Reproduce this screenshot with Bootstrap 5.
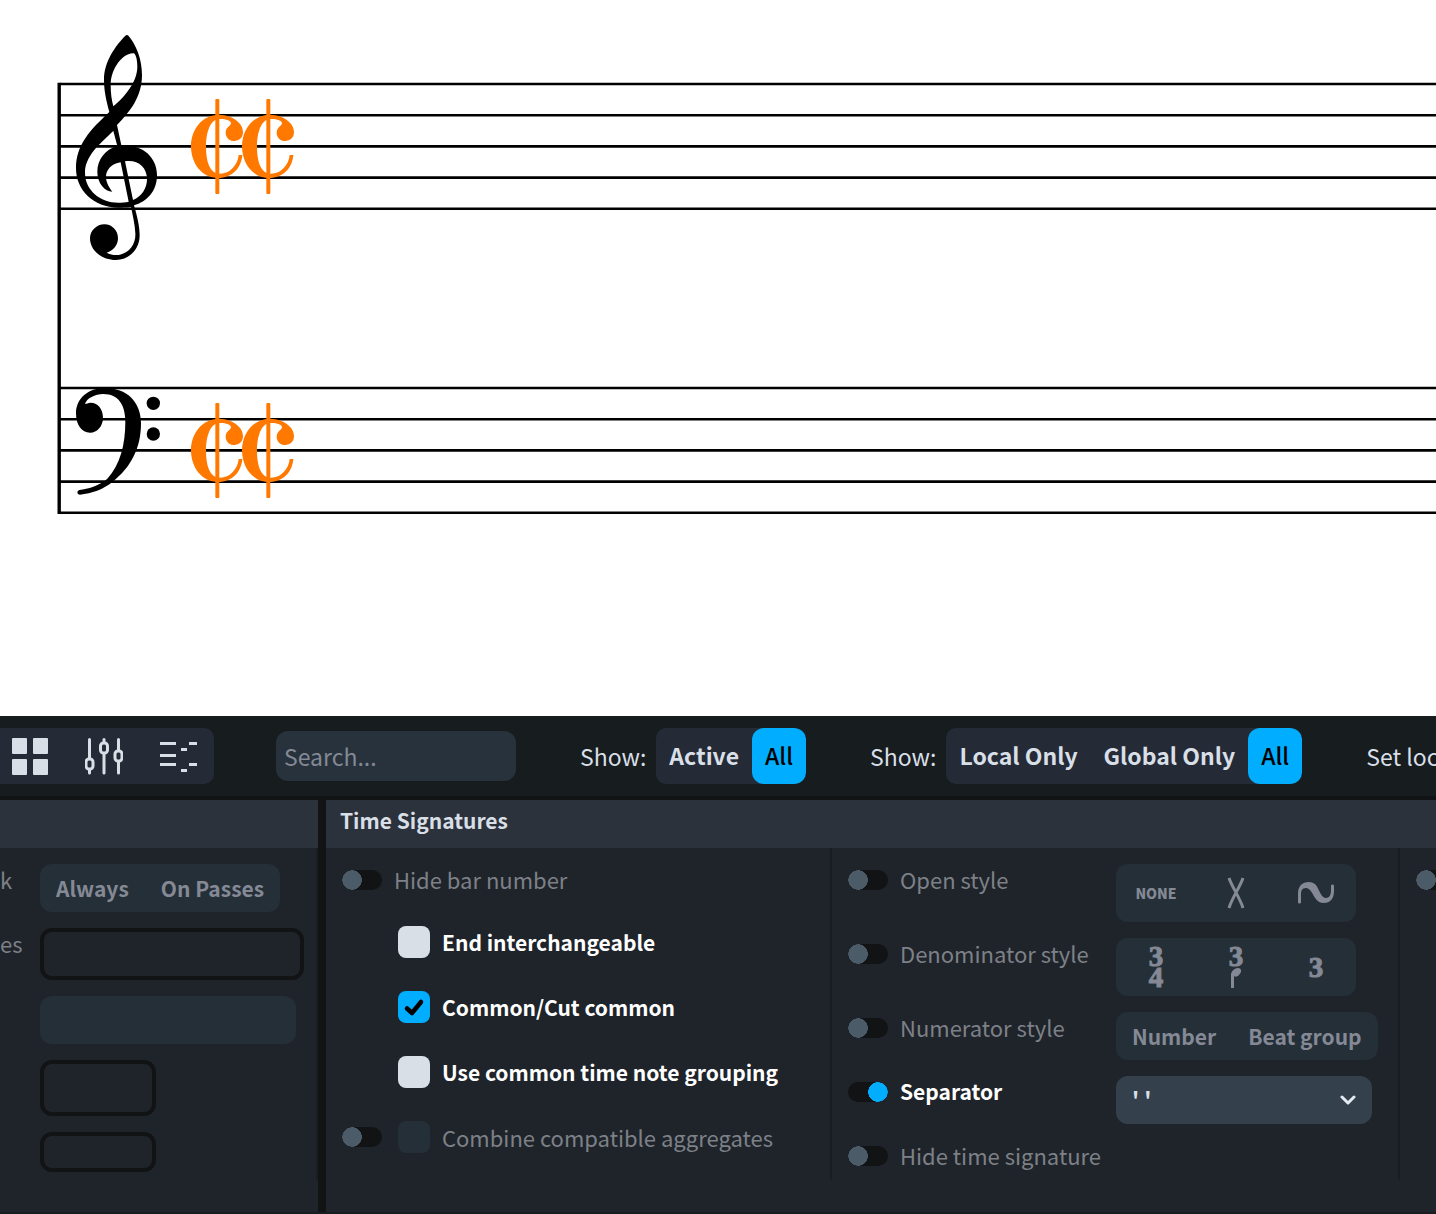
<!DOCTYPE html>
<html lang="en">
<head>
<meta charset="utf-8">
<meta name="viewport" content="width=device-width, initial-scale=1">
<title>Time Signatures – Properties</title>
<link href="https://cdn.jsdelivr.net/npm/bootstrap@5.3.0/dist/css/bootstrap.min.css" rel="stylesheet">
<style>
  body { font-family: "Noto Sans CJK SC", "Noto Sans", sans-serif; font-size: 22px; line-height: 32px; background: #fff; color: #7d8187; overflow-x: hidden; }
  .score-area { height: 716px; overflow: hidden; }
  .score-area svg { display: block; width: 100%; height: 100%; }
  .tool-strip { background: #171c1f; border-bottom: 4px solid #111315; height: 84px; padding: 12px 0; color: #d9dfe7; font-size: 23px; white-space: nowrap; overflow: hidden; }
  .tool-strip > * { flex: none; }
  .filter-set { display: flex; align-items: center; gap: 10px; margin-left: 64px; }
  .pill-set { background: #252f38; border-radius: 12px; overflow: hidden; display: inline-flex; flex: none; }
  .pill-set .btn { --bs-btn-color: #848995; --bs-btn-border-width: 0; --bs-btn-padding-x: 16px; --bs-btn-padding-y: 0; --bs-btn-border-radius: 0; --bs-btn-font-size: 21px; --bs-btn-line-height: 48px; --bs-btn-font-weight: 700; --bs-btn-hover-color: #d9dfe7; white-space: nowrap; }
  .tool-strip .pill-set { background: #252b36; border-radius: 10px; height: 56px; }
  .tool-strip .pill-set .btn { --bs-btn-color: #d9dfe7; --bs-btn-padding-x: 13px; --bs-btn-font-size: 23px; --bs-btn-line-height: 54px; --bs-btn-border-radius: 12px; --bs-btn-active-bg: #00adff; --bs-btn-active-color: #000; padding-bottom: 2px; }
  .tool-strip .pill-set .btn.active { font-weight: 500; }
  .tool-strip .view-set .btn { padding: 0 18px; line-height: 1; }
  .tool-strip .view-set .btn:first-child { padding-left: 11px; }
  .tool-strip .view-set .btn:last-child { padding-right: 17px; }
  .tool-strip .view-set { border-radius: 0 10px 10px 0; margin-right: 62px; }
  .find-box.form-control { width: 240px; height: 50px; background: #27323c; border: 0; border-radius: 12px; color: #d9dfe7; font-size: 23px; padding: 0 8px; }
  .find-box::placeholder { color: #848995; }
  .props { background: #1f242b; min-height: 414px; border-bottom: 2px solid #181c20; }
  .props-head { background: #2b323c; height: 48px; padding: 5px 14px; font-size: 21px; font-weight: 700; color: #d9dfe7; margin: 0; line-height: 30px; }
  .panel-left { flex: 0 0 326px; border-right: 8px solid #111315; }
  .panel-main { flex: 1 1 0; min-width: 0; overflow: hidden; }
  .prop-col { min-height: 332px; padding: 16px 16px 8px; border-right: 2px solid #191d21; flex: none; }
  .left-col { padding: 16px 12px 8px 0; }
  .left-col .lbl { width: 40px; line-height: 30px; }
  .mid-col { width: 506px; }
  .right-col { width: 568px; }
  .side-col { width: 300px; }
  .toggle-line { display: flex; align-items: center; height: 32px; gap: 12px; }
  .toggle-line label { padding-bottom: 2px; }
  .toggle-line .form-check-input { margin: 0; float: none; flex: none; width: 40px; height: 20px; border: 0; border-radius: 10px; background: radial-gradient(circle at 10px 10px, #4b5b68 9px, transparent 10px) #111315; }
  .toggle-line .form-check-input { background: radial-gradient(circle at 10px 10px, #4b5b68 95%, transparent) left / 20px 20px no-repeat, #111315; background: radial-gradient(circle closest-side, #4b5b68 96%, transparent) left / 20px 20px no-repeat #111315; }
  .toggle-line .form-check-input:checked { background: radial-gradient(circle closest-side, #00adff 96%, transparent) right / 20px 20px no-repeat #111315; }
  .lbl-on { color: #fff; font-size: 21px; font-weight: 700; }
  .right-col .toggle-line { width: 268px; }
  .tick-list { display: flex; flex-direction: column; gap: 33px; margin-top: 30px; }
  .tick-line { display: flex; align-items: center; height: 32px; gap: 12px; padding-left: 56px; }
  .tick-line .tick { margin: 0; flex: none; width: 32px; height: 32px; border: 0; border-radius: 8px; background-color: #d9dfe7; }
  .tick-line .tick:checked { background-color: #00adff; background-image: url("data:image/svg+xml,%3Csvg xmlns='http://www.w3.org/2000/svg' viewBox='0 0 32 32'%3E%3Cpath d='M9 17.500l5 4.500 9-11' fill='none' stroke='%23000' stroke-width='4.500' stroke-linecap='round' stroke-linejoin='round'/%3E%3C/svg%3E"); }
  .tick-line .tick:disabled { background-color: #252f38; opacity: 1; }
  .tick-line .tick:disabled ~ label { opacity: 1; }
  .tick-line.with-switch { padding-left: 0; }
  .tick-line.with-switch .toggle-line { width: 44px; }
  .text-slot.form-control { background: transparent; border: 4px solid #111315; border-radius: 12px; padding: 0 12px; }
  .slot-wide { width: 264px; height: 52px; }
  .slot-tall { width: 116px; height: 56px; }
  .slot-low { width: 116px; height: 40px; }
  .drop.form-select { width: 256px; height: 48px; border: 0; border-radius: 12px; font-size: 22px; font-weight: 700; line-height: 32px; padding: 0 48px 4px 16px; color: #d9dfe7; background: #34414d url("data:image/svg+xml,%3Csvg xmlns='http://www.w3.org/2000/svg' viewBox='0 0 16 10'%3E%3Cpath d='M2 2l6 6 6-6' fill='none' stroke='%23e4eaf2' stroke-width='3' stroke-linecap='round' stroke-linejoin='round'/%3E%3C/svg%3E") no-repeat right 16px center / 16px 10px; }
  .drop.drop-off.form-select { background: #252f38; opacity: 1; }
  .icon-set .btn { width: 80px; height: 58px; padding: 0; display: flex; align-items: center; justify-content: center; }
  .icon-set .none-word { font-size: 14px; font-weight: 900; }
  .meter { font-family: "Liberation Serif", serif; font-size: 29px; line-height: 21px; font-weight: 700; -webkit-text-stroke: 1px currentColor; display: flex; flex-direction: column; align-items: center; }
</style>
</head>
<body>
<div class="score-area">
  <svg role="img" aria-label="Grand staff with treble and bass clef and two cut common signatures">
    <defs>
      <g id="cut">
        <path d="M508 284C550 286 579 310 579 336C579 352 568 363 552 363C538 363 527 352 527 338C527 320 544 318 543 308C540 299 520 297 508 297C480 297 468 340 468 380C468 425 480 461 510 461C540 461 563 435 566 405L577 405C574 445 545 474 505 474C455 474 423 430 423 378C423 330 455 284 508 284Z"/>
        <rect x="496" y="237" width="12" height="285" rx="3"/>
      </g>
      <g id="cuts" fill="#ff7900"><use href="#cut"/><use href="#cut" x="153"/></g>
    </defs>
    <g stroke="#000" stroke-width="2.600">
      <path d="M59.200 82.700V514" stroke-width="3.400"/>
      <line x1="60" x2="100%" y1="84" y2="84"/><line x1="60" x2="100%" y1="115.200" y2="115.200"/><line x1="60" x2="100%" y1="146.400" y2="146.400"/><line x1="60" x2="100%" y1="177.600" y2="177.600"/><line x1="60" x2="100%" y1="208.800" y2="208.800"/>
      <line x1="60" x2="100%" y1="388" y2="388"/><line x1="60" x2="100%" y1="419.200" y2="419.200"/><line x1="60" x2="100%" y1="450.400" y2="450.400"/><line x1="60" x2="100%" y1="481.600" y2="481.600"/><line x1="60" x2="100%" y1="512.800" y2="512.800"/>
    </g>
    <g transform="translate(50 20) scale(.33333)">
      <path fill-rule="evenodd" d="M226 47C229 44 233 44 236 48C258 75 276 115 276 165C276 230 240 275 201 315L214 376C275 372 321 410 321 465C321 515 290 545 252 556C262 590 269 620 269 645C269 690 235 720 198 720C155 720 120 692 120 655C120 632 140 613 163 613C187 613 204 632 204 655C204 675 190 692 170 698C180 705 200 706 210 704C240 698 258 670 256 640C255 615 248 585 243 561C230 563 215 563 205 563C130 563 78 510 78 445C78 375 120 330 178 276C170 245 162 215 162 180C162 125 195 79 226 47ZM190 259C225 230 262 185 262 140C262 120 258 105 252 100C225 95 182 140 182 195C182 220 185 240 190 259ZM190 333C145 375 105 410 105 458C105 510 150 548 205 548C215 548 227 547 236 545L212 427C185 430 168 450 168 470C168 490 180 505 187 515C165 515 142 490 142 455C142 420 165 388 202 378ZM225 424L249 540C275 530 291 505 291 478C291 440 262 418 225 424Z"/>
      <use href="#cuts"/>
      <use href="#cuts" y="912"/>
    </g>
    <g transform="translate(50 370) scale(.33333)">
      <path d="M165 54C115 54 78 85 78 130C78 165 95 188 120 188C142 188 159 168 159 143C159 115 142 98 122 98C115 98 109 102 105 102C110 85 135 72 160 72C205 72 226 105 226 155C226 225 210 285 172 326C145 349 115 356 88 360C80 362 80 374 90 374C125 370 160 358 188 335C242 293 273 235 273 160C273 95 230 54 165 54Z"/>
      <circle cx="310" cy="100" r="20"/><circle cx="310" cy="192" r="20"/>
    </g>
  </svg>
</div>

<div class="tool-strip d-flex align-items-center">
  <div class="pill-set view-set">
    <button type="button" class="btn" aria-label="Grid"><svg width="38" height="38" fill="#d9dfe7"><rect x="1" y="1" width="15" height="16" rx="1"/><rect x="22" y="1" width="15" height="16" rx="1"/><rect x="1" y="22" width="15" height="16" rx="1"/><rect x="22" y="22" width="15" height="16" rx="1"/></svg></button>
    <button type="button" class="btn" aria-label="Mixer"><svg width="38" height="38" fill="#252b36" stroke="#d9dfe7" stroke-width="3" stroke-linecap="round"><path d="M4.500 2.500V36M19 2.500V36M33.500 2.500V36"/><rect x="1" y="22" width="7" height="10" rx="3"/><rect x="15.500" y="6" width="7" height="10" rx="3"/><rect x="30" y="14" width="7" height="10" rx="3"/></svg></button>
    <button type="button" class="btn" aria-label="List"><svg width="38" height="38" fill="#d9dfe7"><path d="M1 5h16v3H1zM1 17h16v3H1zM1 26h16v3H1zM30 5h8v3h-8zM22 11h6v3h-6zM30 26h8v3h-8zM22 32h6v3h-6z"/></svg></button>
  </div>
  <input type="text" class="form-control find-box" placeholder="Search..." aria-label="Search">
  <div class="filter-set">
    <span>Show:</span>
    <div class="pill-set" role="group"><button type="button" class="btn">Active</button><button type="button" class="btn active">All</button></div>
  </div>
  <div class="filter-set">
    <span>Show:</span>
    <div class="pill-set" role="group"><button type="button" class="btn">Local Only</button><button type="button" class="btn">Global Only</button><button type="button" class="btn active">All</button></div>
  </div>
  <div class="filter-set"><span>Set loc</span></div>
</div>

<div class="props d-flex">
  <section class="panel-left">
    <div class="props-head"></div>
    <div class="prop-col left-col d-flex flex-column gap-3">
      <div class="d-flex"><span class="lbl">k</span><div class="pill-set" role="group"><button type="button" class="btn">Always</button><button type="button" class="btn">On Passes</button></div></div>
      <div class="d-flex"><label class="lbl" for="f1">es</label><input id="f1" type="text" class="form-control text-slot slot-wide"></div>
      <div class="d-flex"><span class="lbl"></span><select class="form-select drop drop-off" aria-label="Option" disabled><option></option></select></div>
      <div class="d-flex"><span class="lbl"></span><input type="text" class="form-control text-slot slot-tall" aria-label="Value"></div>
      <div class="d-flex"><span class="lbl"></span><input type="text" class="form-control text-slot slot-low" aria-label="Value"></div>
    </div>
  </section>
  <section class="panel-main">
    <h2 class="props-head">Time Signatures</h2>
    <div class="d-flex">
      <div class="prop-col mid-col">
        <div class="toggle-line"><input class="form-check-input" type="checkbox" role="switch" id="s1"><label for="s1">Hide bar number</label></div>
        <div class="tick-list">
          <div class="tick-line"><input class="form-check-input tick" type="checkbox" id="t1"><label class="lbl-on" for="t1">End interchangeable</label></div>
          <div class="tick-line"><input class="form-check-input tick" type="checkbox" id="t2" checked><label class="lbl-on" for="t2">Common/Cut common</label></div>
          <div class="tick-line"><input class="form-check-input tick" type="checkbox" id="t3"><label class="lbl-on" for="t3">Use common time note grouping</label></div>
          <div class="tick-line with-switch"><span class="toggle-line"><input class="form-check-input" type="checkbox" role="switch" aria-label="Enable combine compatible aggregates"></span><input class="form-check-input tick" type="checkbox" id="t4" disabled><label for="t4">Combine compatible aggregates</label></div>
        </div>
      </div>
      <div class="prop-col right-col d-flex flex-column gap-3">
        <div class="d-flex"><div class="toggle-line"><input class="form-check-input" type="checkbox" role="switch" id="s2"><label for="s2">Open style</label></div>
          <div class="pill-set icon-set" role="group">
            <button type="button" class="btn none-word">NONE</button>
            <button type="button" class="btn" aria-label="Cross"><svg width="18" height="32" fill="none" stroke="#848995" stroke-width="3"><path d="M2 1C5 10 13 21 16 31M16 1C13 10 5 21 2 31"/></svg></button>
            <button type="button" class="btn" aria-label="Penderecki"><svg width="36" height="22" fill="#848995"><path d="M0 20V12C0 4 4 0 11 0C22 0 20 15 28 16C32 16 33 12 33 8V4C33 2 36 2 36 4V9C36 17 32 21 26 21C15 21 16 7 8 6C4 6 3 9 3 12V20C3 22 0 22 0 20Z"/></svg></button>
          </div></div>
        <div class="d-flex"><div class="toggle-line"><input class="form-check-input" type="checkbox" role="switch" id="s3"><label for="s3">Denominator style</label></div>
          <div class="pill-set icon-set" role="group">
            <button type="button" class="btn"><span class="meter"><span>3</span><span>4</span></span></button>
            <button type="button" class="btn" aria-label="3 over note"><span class="meter"><span>3</span><svg width="12" height="21" fill="#848995"><path d="M1 21V8C1 4 5 1 8 1C12 1 12 5 9 8C7 10 5 10 4 9V21Z"/></svg></span></button>
            <button type="button" class="btn"><span class="meter">3</span></button>
          </div></div>
        <div class="d-flex"><div class="toggle-line"><input class="form-check-input" type="checkbox" role="switch" id="s4"><label for="s4">Numerator style</label></div>
          <div class="pill-set" role="group"><button type="button" class="btn">Number</button><button type="button" class="btn">Beat group</button></div></div>
        <div class="d-flex"><div class="toggle-line"><input class="form-check-input" type="checkbox" role="switch" id="s5" checked><label class="lbl-on" for="s5">Separator</label></div>
          <select class="form-select drop" aria-label="Separator"><option>' '</option></select></div>
        <div class="toggle-line"><input class="form-check-input" type="checkbox" role="switch" id="s6"><label for="s6">Hide time signature</label></div>
      </div>
      <div class="prop-col side-col"><div class="toggle-line"><input class="form-check-input" type="checkbox" role="switch" aria-label="More"></div></div>
    </div>
  </section>
</div>
<script src="https://cdn.jsdelivr.net/npm/bootstrap@5.3.0/dist/js/bootstrap.bundle.min.js"></script>
</body>
</html>
